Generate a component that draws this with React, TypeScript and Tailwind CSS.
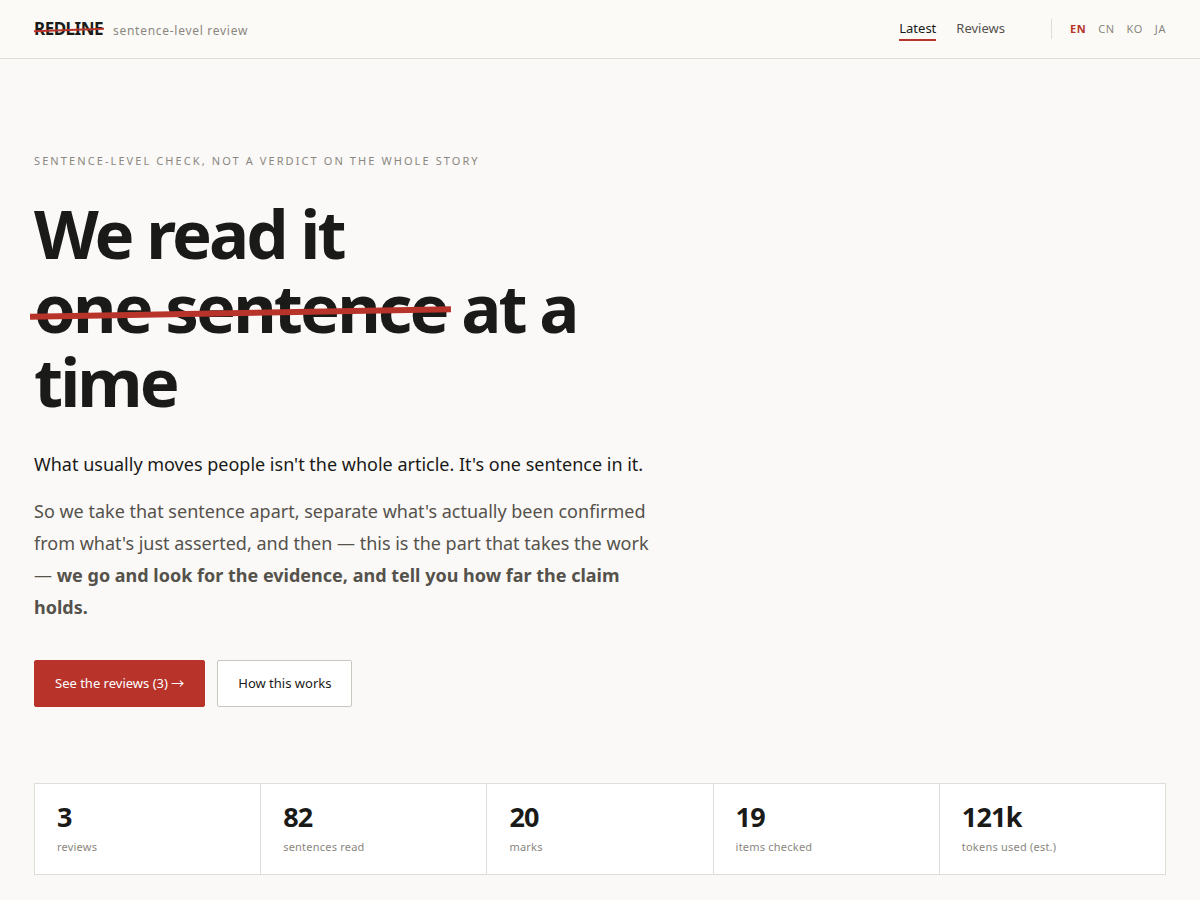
const stats = [
  { value: "3", label: "reviews" },
  { value: "82", label: "sentences read" },
  { value: "20", label: "marks" },
  { value: "19", label: "items checked" },
  { value: "121k", label: "tokens used (est.)" },
];

const languages = ["EN", "CN", "KO", "JA"];

function Header() {
  return (
    <header className="border-b border-[#dfddd8] bg-[#fbfaf7]">
      <div className="flex h-[58px] items-center justify-between px-[34px]">
        <div className="flex items-baseline gap-[10px] pt-[2px]">
          <a href="#" className="relative text-[17px] leading-6 font-bold tracking-[-0.03em]">
            REDLINE
            <span className="absolute top-[12px] -right-px left-0 h-[2px] -rotate-2 bg-[#b8342b]" />
          </a>
          <span className="text-[12px] leading-6 tracking-[0.06em] text-[#8a8780]">sentence-level review</span>
        </div>
        <div className="flex items-center">
          <nav className="flex gap-5 text-[13px] leading-[21px]">
            <a href="#latest" className="border-b-2 border-[#b8342b]">Latest</a>
            <a href="#reviews" className="border-b-2 border-transparent text-[#55524c]">Reviews</a>
          </nav>
          <div className="ml-[46px] flex gap-3 border-l border-[#dfddd8] pl-[18px] text-[11px] leading-5 tracking-[0.05em] text-[#8a8780]">
            {languages.map((code) => (
              <a key={code} href="#" className={code === "EN" ? "font-bold text-[#b8342b]" : ""}>{code}</a>
            ))}
          </div>
        </div>
      </div>
    </header>
  );
}

export default function App() {
  return (
    <div className="min-h-screen bg-[#faf9f7] font-['Noto_Sans','Noto_Sans_CJK_SC',sans-serif] text-[#1a1a18]">
      <Header />
      <main className="px-[34px] pt-[92px] pb-[25px]">
        <p className="text-[11px] leading-5 tracking-[0.19em] text-[#8a8780] uppercase">
          Sentence-level check, not a verdict on the whole story
        </p>
        <h1 className="mt-[25px] max-w-[620px] text-[67px] leading-[74px] font-bold tracking-[-0.043em]">
          We read it<br />
          <span className="relative inline-block">
            one sentence
            <span className="absolute top-[40px] -right-1 -left-1 h-[6px] -rotate-1 bg-[#b8342b]" />
          </span>{" "}
          at a time
        </h1>
        <div className="mt-[30px] max-w-[620px] text-[18px] leading-8">
          <p>What usually moves people isn't the whole article. It's one sentence in it.</p>
          <p className="mt-[15px] text-[#55524c]">
            So we take that sentence apart, separate what's actually been confirmed from what's just asserted, and
            then — this is the part that takes the work —{" "}
            <strong className="font-bold">we go and look for the evidence, and tell you how far the claim holds.</strong>
          </p>
        </div>
        <div className="mt-[37px] flex gap-3 text-[13px] leading-[21px]">
          <button className="rounded-[2px] border border-[#b8342b] bg-[#b8342b] px-5 py-3 text-white">See the reviews (3) →</button>
          <button className="rounded-[2px] border border-[#c9c6bf] bg-white px-5 py-3">How this works</button>
        </div>
        <dl className="mt-[76px] grid grid-cols-5 gap-px border border-[#dfddd8] bg-[#dfddd8]">
          {stats.map(({ value, label }) => (
            <div key={label} className="flex flex-col-reverse bg-white px-[22px] py-[17px]">
              <dt className="mt-1 text-[11px] leading-5 tracking-[0.02em] text-[#8a8780]">{label}</dt>
              <dd className="text-[27px] leading-8 font-bold tracking-[-0.03em]">{value}</dd>
            </div>
          ))}
        </dl>
      </main>
    </div>
  );
}
